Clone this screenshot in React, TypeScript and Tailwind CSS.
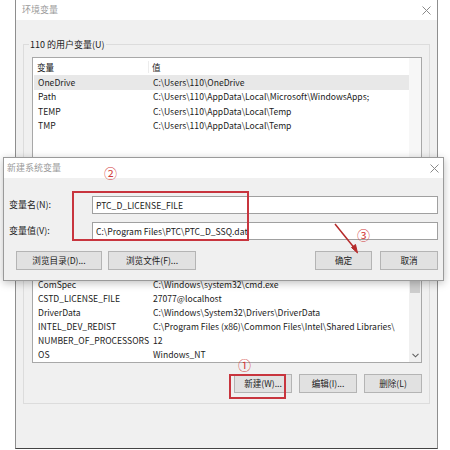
// ─── Data ─────────────────────────────────────────────────────────────────────

const userVars = [
  { name: "OneDrive", value: "C:\\Users\\110\\OneDrive", selected: true },
  { name: "Path", value: "C:\\Users\\110\\AppData\\Local\\Microsoft\\WindowsApps;" },
  { name: "TEMP", value: "C:\\Users\\110\\AppData\\Local\\Temp" },
  { name: "TMP", value: "C:\\Users\\110\\AppData\\Local\\Temp" },
];

// first row sits behind the dialog, so it is left blank
const systemVars = [
  { name: "", value: "" },
  { name: "ComSpec", value: "C:\\Windows\\system32\\cmd.exe" },
  { name: "CSTD_LICENSE_FILE", value: "27077@localhost" },
  { name: "DriverData", value: "C:\\Windows\\System32\\Drivers\\DriverData" },
  { name: "INTEL_DEV_REDIST", value: "C:\\Program Files (x86)\\Common Files\\Intel\\Shared Libraries\\" },
  { name: "NUMBER_OF_PROCESSORS", value: "12" },
  { name: "OS", value: "Windows_NT" },
];

// ─── Primitives ───────────────────────────────────────────────────────────────

function CloseIcon() {
  return (
    <svg width="9" height="9" viewBox="0 0 9 9" aria-hidden="true">
      <path d="M0.5 0.5L8.5 8.5M8.5 0.5L0.5 8.5" stroke="#8a8a8a" strokeWidth="1" />
    </svg>
  );
}

function WinButton({ label, className = "" }: { label: string; className?: string }) {
  return (
    <div
      className={[
        "flex h-[19px] items-center justify-center border border-[#b4b4b4] bg-[#e1e1e1]",
        className,
      ].join(" ")}
    >
      {label}
    </div>
  );
}

function Circled({ children, className = "" }: { children: string; className?: string }) {
  return (
    <span
      className={[
        "absolute text-[13px] leading-none text-[#d23a3a]",
        className,
      ].join(" ")}
    >
      {children}
    </span>
  );
}

// ─── App ──────────────────────────────────────────────────────────────────────

export default function App() {
  return (
    <div className="relative flex h-[450px] w-[450px] overflow-hidden bg-white font-['Noto_Sans_CJK_SC','Noto_Sans',sans-serif] text-[8.6px] text-[#1b1b1b]">
      {/* Environment variables window (background) */}
      <div className="ml-[15px] flex h-[449px] w-[423px] flex-col border-x border-b border-[#8e8e8e] border-b-[#444]">
        <div className="flex h-[20px] items-center justify-between bg-white pl-[6px] pr-[6px]">
          <span className="text-[9px] text-[#9a9a9a]">环境变量</span>
          <CloseIcon />
        </div>

        <div className="flex flex-1 flex-col bg-[#f0f0f0] px-[7px] pt-[18px]">
          {/* User variables */}
          <fieldset className="border border-[#dcdcdc] pb-[8px]">
            <legend className="ml-[5px] px-[1px] text-[9px] leading-[13px]">110 的用户变量(U)</legend>
            <div className="ml-[8px] mr-[7px] mt-[6px] flex h-[150px] border border-[#a8a8a8] bg-white">
              <div className="flex flex-1 flex-col pt-[1px]">
                <div className="flex h-[16px] items-center">
                  <span className="w-[116px] border-r border-[#ececec] pl-[4px]">变量</span>
                  <span className="pl-[3px]">值</span>
                </div>
                {userVars.map((v) => (
                  <div
                    key={v.name}
                    className={[
                      "ml-[1px] flex h-[14.5px] items-center",
                      v.selected ? "bg-[#e8e8e8]" : "",
                    ].join(" ")}
                  >
                    <span className="w-[115px] pl-[4px]">{v.name}</span>
                    <span className="pl-[4px]">{v.value}</span>
                  </div>
                ))}
              </div>
              <div className="w-[12px] bg-[#f7f7f7]" />
            </div>
          </fieldset>

          {/* System variables (its label is hidden by the dialog) */}
          <fieldset className="mt-[16px] border border-[#dcdcdc] pb-[10px]">
            <div className="ml-[8px] mr-[7px] mt-[29px] flex h-[101px] border border-[#a8a8a8] bg-white">
              <div className="flex flex-1 flex-col">
                {systemVars.map((v, i) => (
                  <div key={i} className="flex h-[14.4px] items-center">
                    <span className="w-[116px] whitespace-nowrap pl-[5px]">{v.name}</span>
                    <span className="whitespace-nowrap pl-[4px]">{v.value}</span>
                  </div>
                ))}
              </div>
              <div className="flex w-[12px] flex-col bg-[#f0f0f0]">
                <div className="h-[13px]" />
                <div className="mx-[1px] h-[17px] bg-[#cdcdcd]" />
                <div className="flex-1" />
                <div className="flex h-[13px] items-center justify-center">
                  <svg width="7" height="5" viewBox="0 0 7 5" aria-hidden="true">
                    <path d="M0.5 0.8L3.5 3.8L6.5 0.8" stroke="#606060" strokeWidth="1.1" fill="none" />
                  </svg>
                </div>
              </div>
            </div>
            <div className="mr-[7px] mt-[11px] flex justify-end gap-[7px]">
              <WinButton label="新建(W)..." className="w-[58px]" />
              <WinButton label="编辑(I)..." className="w-[58px]" />
              <WinButton label="删除(L)" className="w-[58px]" />
            </div>
          </fieldset>
        </div>
      </div>

      {/* New system variable dialog (on top) */}
      <div className="absolute left-[3px] top-[157px] flex h-[124px] w-[441px] flex-col border border-[#9a9a9a] shadow-[0_2px_8px_rgba(0,0,0,0.25)]">
        <div className="flex h-[20px] items-center justify-between bg-white pl-[3px] pr-[4px]">
          <span className="text-[9px] text-[#9a9a9a]">新建系统变量</span>
          <CloseIcon />
        </div>
        <div className="flex flex-1 flex-col bg-[#f0f0f0] pl-[4px] pr-[5px] pt-[18px]">
          <div className="flex items-center">
            <span className="w-[84px] pl-[1px] text-[9px]">变量名(N):</span>
            <div className="flex h-[18px] flex-1 items-center border border-[#a0a0a0] bg-white pl-[3px]">
              PTC_D_LICENSE_FILE
            </div>
          </div>
          <div className="mt-[8px] flex items-center">
            <span className="w-[84px] pl-[1px] text-[9px]">变量值(V):</span>
            <div className="flex h-[18px] flex-1 items-center border border-[#a0a0a0] bg-white pl-[3px]">
              C:\Program Files\PTC\PTC_D_SSQ.dat
            </div>
          </div>
          <div className="mt-[11px] flex items-center">
            <WinButton label="浏览目录(D)..." className="ml-[8px] w-[86px]" />
            <WinButton label="浏览文件(F)..." className="ml-[6px] w-[88px]" />
            <div className="flex-1" />
            <WinButton label="确定" className="w-[57px]" />
            <WinButton label="取消" className="ml-[8px] w-[58px]" />
          </div>
        </div>
      </div>

      {/* Annotations */}
      <div className="absolute left-[72px] top-[191px] h-[50px] w-[177px] border-2 border-[#c8353e]" />
      <div className="absolute left-[229px] top-[374px] h-[25px] w-[57px] border-2 border-[#c8353e]" />
      <Circled className="left-[104px] top-[166px]">②</Circled>
      <Circled className="left-[238px] top-[358px]">①</Circled>
      <Circled className="left-[357px] top-[228px]">③</Circled>
      <svg className="absolute left-0 top-0" width="450" height="450" aria-hidden="true">
        <path d="M335 224L356 250" stroke="#b52a2a" strokeWidth="1.5" />
        <path d="M351.5 247.5L357.5 253L355.5 244.5Z" fill="#b52a2a" stroke="#b52a2a" strokeWidth="1" />
      </svg>
    </div>
  );
}
